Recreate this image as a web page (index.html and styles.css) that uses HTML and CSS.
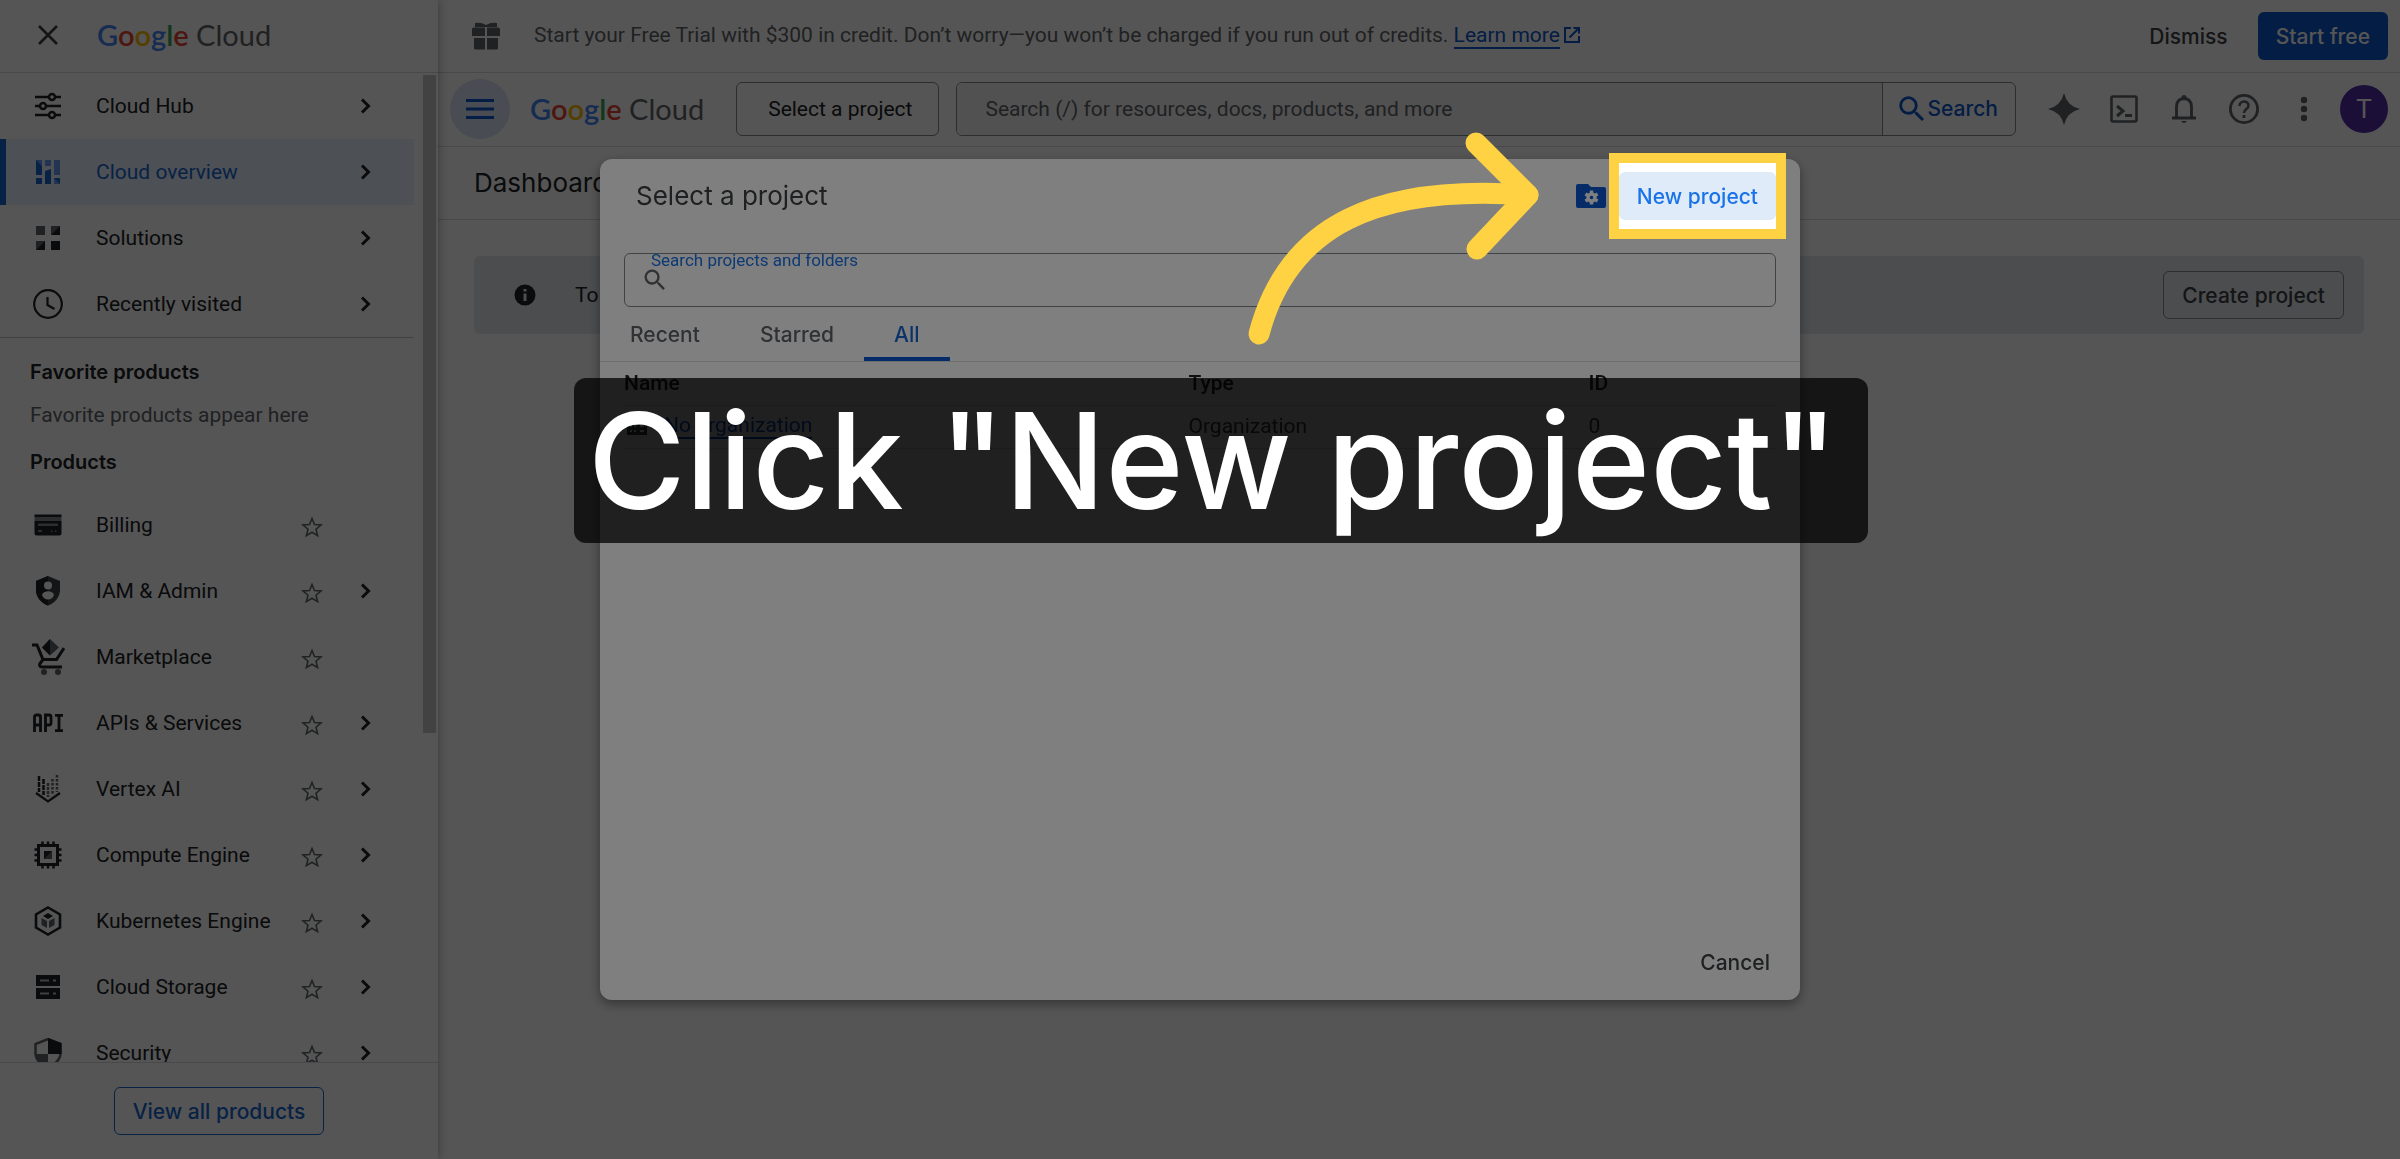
FILE: index.html
```html
<!DOCTYPE html>
<html lang="en">
<head>
<meta charset="utf-8">
<meta name="viewport" content="width=device-width, initial-scale=1">
<title>Dashboard – Google Cloud</title>
<link rel="stylesheet" href="styles.css">
</head>
<body>
<svg class="defs" aria-hidden="true">
<symbol id="chevron" viewBox="0 0 24 24"><path d="M9 5.500l6.500 6.500L9 18.500" fill="none" stroke="currentColor" stroke-width="3"/></symbol>
<symbol id="star" viewBox="0 0 24 24"><path d="M12 3.500l2.500 6 6.500.500-5 4.200 1.600 6.400L12 17.200l-5.600 3.400L8 14.200 3 10l6.500-.5z" fill="none" stroke="currentColor" stroke-width="1.600"/></symbol>
<symbol id="search" viewBox="0 0 24 24"><path d="M15.500 14h-.79l-.28-.27A6.470 6.470 0 0 0 16 9.500 6.500 6.500 0 1 0 9.500 16c1.610 0 3.090-.59 4.230-1.570l.27.28v.79l5 4.990L20.490 19zm-6 0a4.500 4.500 0 1 1 0-9 4.500 4.500 0 0 1 0 9z" fill="currentColor"/></symbol>
</svg>

<div class="page">
<aside class="sidebar">
<div class="sidebar-head">
<button type="button" class="close" aria-label="Close navigation"><svg viewBox="0 0 24 24"><path d="M3 3l18 18M21 3L3 21" fill="none" stroke="currentColor" stroke-width="2.600"/></svg></button>
<a href="#" class="logo"><b><i class="b">G</i><i class="r">o</i><i class="y">o</i><i class="b">g</i><i class="g">l</i><i class="r">e</i></b> Cloud</a>
</div>
<div class="sidebar-body">
<nav class="menu">
<ul class="top-links">
<li>
<a href="#"><svg viewBox="0 0 30 30" fill="none" stroke="currentColor" stroke-width="2.500"><path d="M2 6h14M22 6h6M2 15h5M13 15h15M2 24h14M22 24h6"/><circle cx="19" cy="6" r="3"/><circle cx="10" cy="15" r="3"/><circle cx="19" cy="24" r="3"/></svg>Cloud Hub</a>
<svg class="chevron"><use href="#chevron"/></svg>
</li>
<li class="active">
<a href="#"><svg viewBox="0 0 30 30"><path d="M3 3h6v15H3zM21 3h6v15h-6zM12 3h6v6h-6z" fill="#669df6"/><path d="M3 3l6 6v9H3zM12 14l6-2v15h-6zM3 21h6v6H3zM21 21h6v6h-6z" fill="#1967d2"/><path d="M21 21l6 6h-6z" fill="#669df6"/></svg>Cloud overview</a>
<svg class="chevron"><use href="#chevron"/></svg>
</li>
<li>
<a href="#"><svg viewBox="0 0 30 30"><path d="M3 3h9v9H3z" fill="#5f6368"/><path d="M18 3h9v9h-9zM3 18h9v9H3zM18 18h9v9h-9z" fill="#202124"/><path d="M18 3h9l-9 9zM3 18h9l-9 9z" fill="#5f6368"/></svg>Solutions</a>
<svg class="chevron"><use href="#chevron"/></svg>
</li>
<li>
<a href="#"><svg viewBox="0 0 30 30" fill="none" stroke="currentColor" stroke-width="2.200"><circle cx="15" cy="15" r="13.800"/><path d="M14.500 8v8l7 4"/></svg>Recently visited</a>
<svg class="chevron"><use href="#chevron"/></svg>
</li>
</ul>
<h2>Favorite products</h2>
<p>Favorite products appear here</p>
<h2 class="products">Products</h2>
<ul>
<li>
<a href="#"><svg viewBox="0 0 30 30"><path d="M1.500 4.500h27v3h-27zM1.500 10.500h27v13a2 2 0 0 1-2 2h-23a2 2 0 0 1-2-2z" fill="#202124"/><path d="M1.500 7.500h27v3h-27z" fill="#80868b"/><path d="M5 13.500h20v2.500H5zM5 20h4v2H5zM18 20.500h1.500V22H18zM22 20.500h1.500V22H22z" fill="#80868b"/></svg>Billing</a>
<button type="button" class="star" aria-label="Pin Billing"><svg><use href="#star"/></svg></button>
</li>
<li>
<a href="#"><svg viewBox="0 0 30 30"><path d="M15 0l12 5v9c0 7-5 13-12 15.500C8 27 3 21 3 14V5z" fill="#3c4043"/><path d="M15 0v29.500C8 27 3 21 3 14V5z" fill="#202124"/><circle cx="15" cy="9.500" r="4" fill="#fff"/><path d="M9 19c1-5 11-5 12 0-2 6-10 6-12 0z" fill="#fff"/></svg>IAM &amp; Admin</a>
<button type="button" class="star" aria-label="Pin IAM"><svg><use href="#star"/></svg></button>
<svg class="chevron"><use href="#chevron"/></svg>
</li>
<li>
<a href="#"><svg class="wide" viewBox="0 0 34 36"><path d="M1 6h5l6 14.500h13.500L33 9M12 20.500l-3 4c-1 2 0 3.500 2 3.500h20" fill="none" stroke="#202124" stroke-width="3"/><path d="M19 0l9 8.500-9 8-8-8z" fill="#5f6368"/><path d="M19 0v16.500l-8-8z" fill="#202124"/><circle cx="13" cy="33" r="3" fill="#5f6368"/><circle cx="27" cy="33" r="3" fill="#5f6368"/></svg>Marketplace</a>
<button type="button" class="star" aria-label="Pin Marketplace"><svg><use href="#star"/></svg></button>
</li>
<li>
<a href="#"><svg viewBox="0 0 30 30" fill="none" stroke="currentColor" stroke-width="2.800"><path d="M1.500 24V9q0-2 2-2h2q2 0 2 2v15M1.500 17h6M12.500 24V7h3.500q2 0 2 2v6q0 2-2 2h-3M22 7.400h8M22 22.600h8M26 7v16"/></svg>APIs &amp; Services</a>
<button type="button" class="star" aria-label="Pin APIs"><svg><use href="#star"/></svg></button>
<svg class="chevron"><use href="#chevron"/></svg>
</li>
<li>
<a href="#"><svg viewBox="0 0 30 30" fill="none" stroke="#202124" stroke-width="2.500"><path d="M6 2v16M10.500 5v16" stroke-dasharray="5 1"/><path d="M15 9v14" stroke="#5f6368" stroke-dasharray="3 1"/><path d="M19.500 5v16M24 1v17" stroke="#5f6368" stroke-dasharray="2.500 1.500"/><path d="M3 19l12 8.500L27 19" stroke-width="2.200"/></svg>Vertex AI</a>
<button type="button" class="star" aria-label="Pin Vertex AI"><svg><use href="#star"/></svg></button>
<svg class="chevron"><use href="#chevron"/></svg>
</li>
<li>
<a href="#"><svg viewBox="0 0 30 30" fill="none" stroke="#202124"><rect x="5.500" y="5.500" width="19" height="19" stroke-width="3"/><path d="M9.500 1.500v4M15 1.500v4M20.500 1.500v4M9.500 24.500v4M15 24.500v4M20.500 24.500v4M1.500 9.500h4M1.500 15h4M1.500 20.500h4M24.500 9.500h4M24.500 15h4M24.500 20.500h4" stroke-width="2.500"/><path d="M11 11h8v8h-8z" fill="#202124" stroke="none"/><path d="M19 11v8h-8z" fill="#5f6368" stroke="none"/></svg>Compute Engine</a>
<button type="button" class="star" aria-label="Pin Compute Engine"><svg><use href="#star"/></svg></button>
<svg class="chevron"><use href="#chevron"/></svg>
</li>
<li>
<a href="#"><svg viewBox="0 0 30 30"><path d="M15 1.500l12 7v13l-12 7-12-7v-13z" fill="none" stroke="#202124" stroke-width="2.600"/><path d="M15 7l5 3-5 3-5-3z" fill="#202124"/><path d="M8.500 12l5.500 3v7l-5.500-3zM21.500 12L16 15v7l5.500-3z" fill="#5f6368"/></svg>Kubernetes Engine</a>
<button type="button" class="star" aria-label="Pin Kubernetes Engine"><svg><use href="#star"/></svg></button>
<svg class="chevron"><use href="#chevron"/></svg>
</li>
<li>
<a href="#"><svg viewBox="0 0 30 30"><path d="M3 3h24v11H3zM3 16h24v11H3z" fill="#202124"/><path d="M7 7.500h9v2H7zM20 7.500h3v2h-3zM7 20.500h9v2H7zM20 20.500h3v2h-3z" fill="#bdc1c6"/></svg>Cloud Storage</a>
<button type="button" class="star" aria-label="Pin Cloud Storage"><svg><use href="#star"/></svg></button>
<svg class="chevron"><use href="#chevron"/></svg>
</li>
<li>
<a href="#"><svg viewBox="0 0 30 30"><path d="M15 1l12.500 5v9c0 6-5 11-12.500 14C7.500 26 2.500 21 2.500 15V6z" fill="none" stroke="#5f6368" stroke-width="2.500"/><path d="M15 0l13.500 5v11H15z" fill="#202124"/><path d="M2 16h13v12C8 26 3 22 2 16z" fill="#5f6368"/></svg>Security</a>
<button type="button" class="star" aria-label="Pin Security"><svg><use href="#star"/></svg></button>
<svg class="chevron"><use href="#chevron"/></svg>
</li>
</ul>
</nav>
<div class="scrollbar"></div>
</div>
<div class="sidebar-foot"><button type="button" class="btn outline-blue">View all products</button></div>
</aside>

<div class="main">
<div class="trial">
<svg class="gift" viewBox="0 0 28 28" fill="#5f6368"><path d="M3 1q6-1 11 2 5-3 11-2v4H3zM0 7q0-1.500 2-1.500h11V14H0zM15 5.500h11q2 0 2 1.500v7H15zM2 16h11v11.500H3.500Q2 27.500 2 26zM15 16h11v10q0 1.500-1.500 1.500H15z"/></svg>
<p>Start your Free Trial with $300 in credit. Don’t worry—you won’t be charged if you run out of credits. <a href="#">Learn more</a><svg class="external" viewBox="0 0 18 18"><path d="M8 2H2v14h14v-6M10.500 2H16v5.500M16 2L6.500 11.500" fill="none" stroke="currentColor" stroke-width="2"/></svg></p>
<button type="button" class="btn">Dismiss</button>
<button type="button" class="btn primary">Start free</button>
</div>

<header class="topbar">
<button type="button" class="hamburger" aria-label="Navigation menu"><svg viewBox="0 0 28 22"><path d="M0 2.500h28M0 11h28M0 19.500h28" stroke="currentColor" stroke-width="3"/></svg></button>
<a href="#" class="logo"><b><i class="b">G</i><i class="r">o</i><i class="y">o</i><i class="b">g</i><i class="g">l</i><i class="r">e</i></b> Cloud</a>
<button type="button" class="picker">Select a project</button>
<form class="search" action="#">
<input type="text" aria-label="Search" placeholder="Search (/) for resources, docs, products, and more">
<button type="submit"><svg><use href="#search"/></svg>Search</button>
</form>
<div class="tools">
<button type="button" aria-label="Gemini"><svg viewBox="0 0 32 32"><path d="M16 0q3 13 16 16-13 3-16 16Q13 19 0 16 13 13 16 0z" fill="currentColor"/></svg></button>
<button type="button" aria-label="Cloud Shell"><svg viewBox="0 0 32 32" fill="none" stroke="currentColor"><rect x="3.500" y="3.500" width="25" height="25" rx="1.500" stroke-width="2.600"/><path d="M9 13l6 5-6 5" stroke-width="3"/><path d="M17 22.500h7" stroke-width="3"/></svg></button>
<button type="button" aria-label="Notifications"><svg viewBox="0 0 32 32"><path d="M8.500 25V14q0-8 7.500-8.500Q23.500 6 23.500 14v11M4 25h24" fill="none" stroke="currentColor" stroke-width="2.800"/><path d="M13.500 5a2.500 3 0 0 1 5 0zM13 28h6q-3 4-6 0z" fill="currentColor"/></svg></button>
<button type="button" aria-label="Help"><svg viewBox="0 0 32 32"><circle cx="16" cy="16" r="13.600" fill="none" stroke="currentColor" stroke-width="2.800"/><path d="M11.500 13c0-6 9-6 9-.5 0 3.500-4.500 3.500-4.500 7.500" fill="none" stroke="currentColor" stroke-width="2.600"/><path d="M14.600 22h2.800v3h-2.800z" fill="currentColor"/></svg></button>
<button type="button" aria-label="More"><svg viewBox="0 0 32 32" fill="currentColor"><circle cx="16" cy="7" r="3.200"/><circle cx="16" cy="16" r="3.200"/><circle cx="16" cy="25" r="3.200"/></svg></button>
<button type="button" class="avatar">T</button>
</div>
</header>

<div class="title-bar"><h1>Dashboard</h1></div>
<div class="notice">
<svg viewBox="0 0 22 22"><circle cx="11" cy="11" r="10.500" fill="#202124"/><path d="M9.500 5h3v2.500h-3zM9.500 9.500h3V17h-3z" fill="#e3e7ec"/></svg>
<p>To view this page, select a project.</p>
<button type="button" class="btn outline">Create project</button>
</div>
</div>
</div>

<div class="scrim">
<section class="dialog" role="dialog" aria-labelledby="dialog-title">
<header class="dialog-head">
<h2 id="dialog-title">Select a project</h2>
<button type="button" class="folder" aria-label="Manage resources"><svg viewBox="0 0 30 24"><path d="M2 0h10l3 3h13q2 0 2 2v17q0 2-2 2H2q-2 0-2-2V2q0-2 2-2z" fill="#0b57d0"/><circle cx="15.500" cy="13.500" r="3.500" fill="none" stroke="#fff" stroke-width="3.400"/><path d="M15.500 6.500v3M15.500 17.500v3M9.400 10l2.700 1.500M18.900 15.500l2.700 1.500M9.400 17l2.700-1.500M18.900 11.500l2.700-1.500" stroke="#fff" stroke-width="3.400"/></svg></button>
<div class="spotlight"><button type="button">New project</button></div>
</header>
<div class="filter">
<label for="filter">Search projects and folders</label>
<div class="filter-row"><svg><use href="#search"/></svg><input id="filter" type="text"></div>
</div>
<div class="tabs" role="tablist">
<button type="button" role="tab">Recent</button>
<button type="button" role="tab">Starred</button>
<button type="button" role="tab" class="selected" aria-selected="true">All</button>
</div>
<table>
<thead><tr><th class="col-name">Name</th><th class="col-type">Type</th><th>ID</th></tr></thead>
<tbody><tr><td><svg class="org" viewBox="0 0 24 24"><path d="M2 3h11v4h9v14H2z" fill="#3c4043"/><path d="M5 6h2v2H5zM9 6h2v2H9zM5 11h2v2H5zM9 11h2v2H9zM5 16h2v2H5zM9 16h2v2H9zM15 11h4v2h-4zM15 16h4v2h-4z" fill="#fff"/></svg><a href="#">No organization</a></td><td>Organization</td><td>0</td></tr></tbody>
</table>
<footer><button type="button" class="btn">Cancel</button></footer>
</section>
</div>

<svg class="arrow" viewBox="0 0 300 220"><path d="M19 194C48 84 138 44 288 55"/><path d="M236 3L288 55L237 109"/></svg>
<div class="caption">Click "New project"</div>
</body>
</html>
```
FILE: styles.css
```css
* {
  box-sizing: border-box;
}
body {
  margin: 0;
  height: 100vh;
  overflow: hidden;
  font-family: Roboto, "Liberation Sans", sans-serif;
  font-size: 21px;
  color: #3c4043;
  background: #fff;
}
h1, h2, p, ul {
  margin: 0;
  padding: 0;
}
ul {
  list-style: none;
}
button, input {
  font: inherit;
  color: inherit;
  border: 0;
  padding: 0;
  background: none;
}
a {
  color: inherit;
  text-decoration: none;
}
svg {
  display: block;
  flex: none;
}
.defs {
  position: absolute;
  width: 0;
  height: 0;
}
.page {
  display: flex;
  height: 100%;
}

/* sidebar */
.sidebar {
  display: flex;
  flex-direction: column;
  flex: none;
  width: 438px;
  z-index: 1;
  box-shadow: 0 0 10px rgba(0,0,0,.35);
  background: #fff;
}
.sidebar-head {
  display: flex;
  align-items: center;
  gap: 37px;
  height: 73px;
  padding: 0 36px 2px;
  border-bottom: 1px solid #dadce0;
}
.close svg {
  width: 24px;
  height: 24px;
}
.logo {
  font-family: Lato, sans-serif;
  font-size: 29px;
  line-height: 36px;
  white-space: nowrap;
  color: #5f6368;
}
.logo b {
  font-weight: 600;
}
.logo i {
  font-style: normal;
}
.logo .b { color: #4285f4; }
.logo .r { color: #ea4335; }
.logo .y { color: #fbbc04; }
.logo .g { color: #34a853; }
.sidebar-body {
  display: flex;
  flex: 1;
  min-height: 0;
  overflow: hidden;
}
.menu {
  width: 414px;
}
.menu li {
  display: flex;
  align-items: center;
  height: 66px;
  padding-right: 37px;
  color: #202124;
}
.menu li.active {
  padding-left: 6px;
  background: linear-gradient(to right, #1967d2 6px, #e8f0fe 6px);
}
.menu li.active a {
  padding-left: 27px;
  color: #1967d2;
}
.menu li > a {
  display: flex;
  align-items: center;
  flex: 1;
  gap: 33px;
  padding-left: 33px;
  white-space: nowrap;
}
.menu li > a svg {
  width: 30px;
  height: 30px;
}
.menu li > a svg.wide {
  width: 34px;
  height: 36px;
  margin: 0 -2px;
}
.menu .top-links {
  border-bottom: 1px solid #c4c7c5;
}
.chevron, .star svg {
  width: 24px;
  height: 24px;
}
.star {
  width: 24px;
  margin-right: 29px;
  padding-top: 4px;
  color: #5f6368;
}
.star:last-child {
  margin-right: 53px;
}
.menu h2 {
  padding: 12px 0 0 30px;
  font: 600 20px/44px Inter, sans-serif;
  color: #202124;
}
.menu h2.products {
  padding-top: 0;
  line-height: 52px;
  margin-bottom: 4px;
}
.menu p {
  padding-left: 30px;
  line-height: 42px;
  color: #5f6368;
}
.scrollbar {
  width: 13px;
  height: 658px;
  margin: 2px 0 0 9px;
  background: #c6c6c6;
}
.sidebar-foot {
  display: flex;
  align-items: center;
  justify-content: center;
  height: 97px;
  border-top: 1px solid #dadce0;
}
.btn {
  height: 48px;
  padding: 0 18px;
  border-radius: 6px;
  font-family: Inter, sans-serif;
  font-weight: 500;
}
.outline {
  border: 1px solid #80868b;
}
.outline-blue {
  border: 1px solid #1967d2;
  color: #1967d2;
}
.primary {
  background: #0b57d0;
  color: #fff;
}

/* main column */
.main {
  flex: 1;
  min-width: 0;
}
.trial {
  display: flex;
  align-items: center;
  height: 73px;
  padding: 0 12px 0 34px;
  border-bottom: 1px solid #dadce0;
}
.gift {
  width: 28px;
  height: 28px;
}
.trial p {
  display: flex;
  flex: 1;
  margin-left: 34px;
  white-space: pre;
  color: #5f6368;
}
.trial p a, .external {
  color: #0b57d0;
}
.trial p a {
  border-bottom: 2px solid;
}
.external {
  width: 18px;
  height: 18px;
  margin: 3px 0 0 3px;
}
.primary {
  margin-left: 12px;
}
.topbar {
  display: flex;
  align-items: center;
  height: 74px;
  padding: 0 12px 2px;
  border-bottom: 1px solid #dadce0;
}
.hamburger {
  display: grid;
  place-items: center;
  width: 60px;
  height: 60px;
  margin-right: 20px;
  border-radius: 50%;
  background: #dbe5f5;
  color: #0b57d0;
}
.hamburger svg {
  width: 28px;
  height: 22px;
}
.picker {
  height: 54px;
  margin: 0 17px 0 32px;
  padding: 0 26px 0 31px;
  border: 1px solid #80868b;
  border-radius: 6px;
  color: #202124;
}
.search {
  display: flex;
  flex: 1;
  height: 54px;
  border: 1px solid #80868b;
  border-radius: 6px;
  overflow: hidden;
}
.search input {
  flex: 1;
  padding: 0 28px;
  background: #f3f3f3;
}
.search input::placeholder {
  color: #5f6368;
  opacity: 1;
}
.search button {
  display: flex;
  align-items: center;
  padding: 0 17px 0 12px;
  border-left: 1px solid #80868b;
  font-family: Inter, sans-serif;
  font-weight: 500;
  color: #0b57d0;
}
.search svg {
  width: 34px;
  height: 34px;
  margin-right: -2px;
}
.tools {
  display: flex;
  align-items: center;
  gap: 28px;
  margin-left: 32px;
  color: #5f6368;
}
.tools svg {
  width: 32px;
  height: 32px;
}
.tools .avatar {
  width: 48px;
  height: 48px;
  margin-left: -8px;
  border-radius: 50%;
  background: #512da8;
  color: #fff;
  font-size: 26px;
}
.title-bar {
  height: 73px;
  padding-left: 36px;
  border-bottom: 1px solid #dadce0;
}
h1 {
  font: 400 26px/72px Inter, sans-serif;
  color: #202124;
}
.notice {
  display: flex;
  align-items: center;
  height: 78px;
  margin: 36px;
  padding: 0 20px 0 40px;
  border-radius: 6px;
  background: #e3e7ec;
}
.notice svg {
  width: 22px;
  height: 22px;
}
.notice p {
  flex: 1;
  margin-left: 39px;
  color: #202124;
}

/* project picker */
.scrim {
  position: fixed;
  z-index: 2;
  inset: 0;
  display: flex;
  justify-content: center;
  padding: 159px 0;
  background: rgba(0,0,0,.33);
}
.dialog {
  display: flex;
  flex-direction: column;
  width: 50%;
  border-radius: 12px;
  background: #fff;
  box-shadow: 0 4px 12px rgba(0,0,0,.4);
}
.dialog-head {
  display: flex;
  align-items: center;
  height: 74px;
  padding: 0 14px 0 36px;
}
.dialog-head h2 {
  flex: 1;
  font: 400 26px/36px Inter, sans-serif;
}
.folder svg {
  width: 30px;
  height: 24px;
}
.folder {
  margin-right: 3px;
}
.spotlight {
  position: relative;
  z-index: 1;
  margin: -10px 0;
  padding: 9px 0;
  border: 10px solid #ffd243;
  background: #fff;
  box-shadow: 0 0 0 3000px rgba(0,0,0,.5);
}
.spotlight button {
  display: block;
  height: 48px;
  padding: 0 18px;
  border-radius: 6px;
  font-family: Inter, sans-serif;
  font-weight: 500;
  background: #e0ebfa;
  color: #1a73e8;
}
.filter {
  height: 54px;
  margin: 20px 24px 0;
  border: 1px solid #80868b;
  border-radius: 6px;
}
.filter label {
  display: block;
  padding-left: 26px;
  font-size: 17px;
  line-height: 12px;
  color: #1a73e8;
}
.filter-row {
  display: flex;
  padding-left: 16px;
  color: #5f6368;
}
.filter-row svg {
  width: 28px;
  height: 28px;
}
.filter-row input {
  flex: 1;
  height: 22px;
  outline: 0;
}
.tabs {
  display: flex;
  height: 55px;
  border-bottom: 1px solid #dadce0;
}
.tabs button {
  padding: 0 30px;
  border-bottom: 4px solid transparent;
  border-top: 4px solid transparent;
  font-family: Inter, sans-serif;
  font-weight: 500;
  color: #5f6368;
}
.tabs .selected {
  border-bottom-color: #0b57d0;
  color: #1967d2;
}
table {
  margin: 0 24px;
  border-collapse: collapse;
  table-layout: fixed;
}
th, td {
  height: 43px;
  padding: 0;
  border-bottom: 1px solid #dadce0;
  text-align: left;
  font-weight: 400;
}
th {
  font-weight: 500;
  color: #202124;
}
td {
  padding-bottom: 2px;
}
.col-name {
  width: 49%;
}
.col-type {
  width: 400px;
}
td a {
  border-bottom: 2px solid;
  color: #0b57d0;
}
.org {
  display: inline-block;
  width: 24px;
  height: 24px;
  margin: 0 15px 0 1px;
  vertical-align: middle;
}
.dialog footer {
  display: flex;
  justify-content: flex-end;
  margin-top: auto;
  padding: 12px 12px 14px;
}

/* walkthrough layer */
.arrow {
  position: absolute;
  z-index: 3;
  left: 1240px;
  top: 140px;
  width: 300px;
  height: 220px;
  overflow: visible;
  fill: none;
  stroke: #ffd243;
  stroke-width: 21px;
  stroke-linecap: round;
  stroke-linejoin: round;
}
.caption {
  position: absolute;
  z-index: 3;
  left: 574px;
  top: 378px;
  padding: 0 30px 0 14px;
  border-radius: 12px;
  font: 500 133px/165px Inter, sans-serif;
  white-space: nowrap;
  color: #fff;
  background: rgba(0,0,0,.75);
}
```
